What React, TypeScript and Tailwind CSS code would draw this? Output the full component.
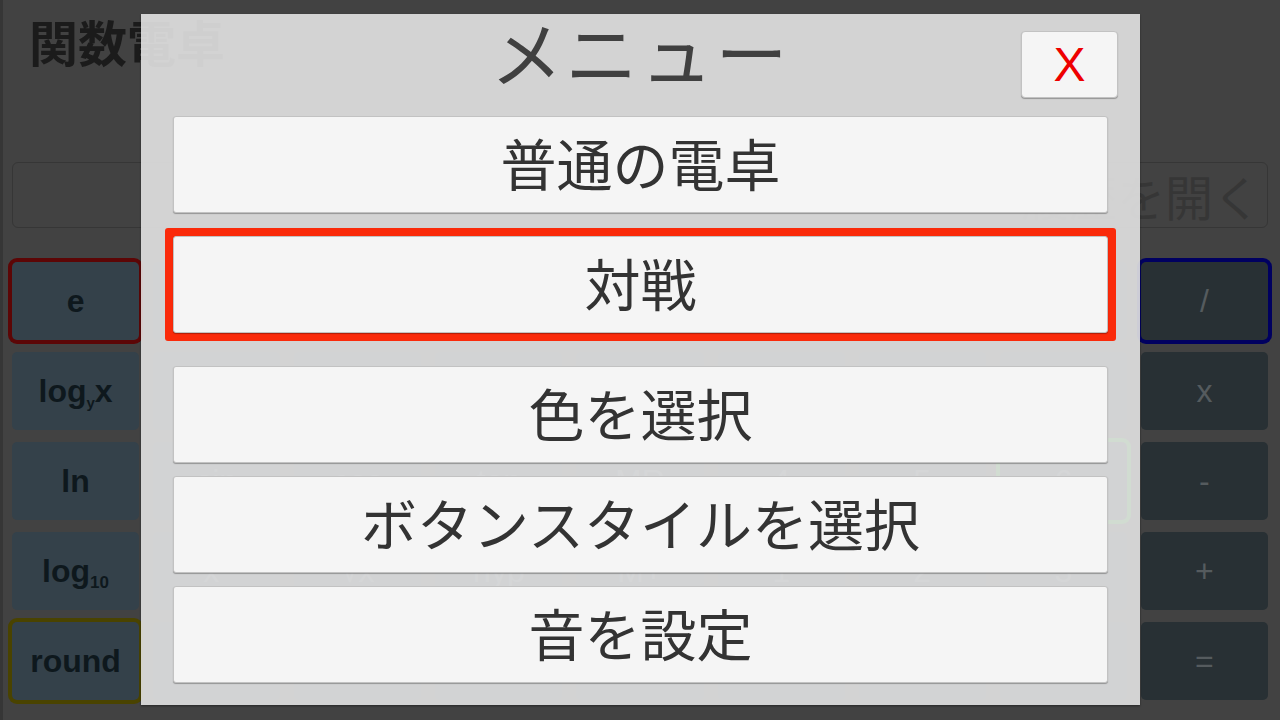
import React from "react";

type Key = {
  label: React.ReactNode;
  kind: "fn" | "num" | "op";
  ring?: string;
};

const jp = "font-['Noto_Sans_CJK_JP','Noto_Sans',sans-serif]";
const latin = "font-['Liberation_Sans',Arial,sans-serif]";

// middle keys of rows 1, 2 and 5 sit fully under the menu buttons, so they carry no label
const rows: Key[][] = [
  [
    { label: "e", kind: "fn", ring: "ring-4 ring-[#5c0606]" },
    { label: "", kind: "num" },
    { label: "", kind: "num" },
    { label: "", kind: "num" },
    { label: "", kind: "num" },
    { label: "", kind: "num" },
    { label: "", kind: "num" },
    { label: "", kind: "num" },
    { label: "/", kind: "op", ring: "ring-4 ring-[#000060]" },
  ],
  [
    {
      label: (
        <>
          log<sub className="text-[15px] align-baseline relative top-[6px]">y</sub>x
        </>
      ),
      kind: "fn",
    },
    { label: "", kind: "num" },
    { label: "", kind: "num" },
    { label: "", kind: "num" },
    { label: "", kind: "num" },
    { label: "", kind: "num" },
    { label: "", kind: "num" },
    { label: "", kind: "num" },
    { label: "x", kind: "op" },
  ],
  [
    { label: "ln", kind: "fn" },
    { label: "sin", kind: "num" },
    { label: "cos", kind: "num" },
    { label: "tan", kind: "num" },
    { label: "MR", kind: "num" },
    { label: "4", kind: "num" },
    { label: "5", kind: "num" },
    { label: "6", kind: "num", ring: "ring-4 ring-[#2f9a2f]" },
    { label: "-", kind: "op" },
  ],
  [
    {
      label: (
        <>
          log<sub className="text-[17px] align-baseline relative top-[6px]">10</sub>
        </>
      ),
      kind: "fn",
    },
    { label: "x²", kind: "num" },
    { label: "√x", kind: "num" },
    { label: "hyp", kind: "num" },
    { label: "M+", kind: "num" },
    { label: "1", kind: "num" },
    { label: "2", kind: "num" },
    { label: "3", kind: "num" },
    { label: "+", kind: "op" },
  ],
  [
    { label: "round", kind: "fn", ring: "ring-4 ring-[#4a4300]" },
    { label: "", kind: "num" },
    { label: "", kind: "num" },
    { label: "", kind: "num" },
    { label: "", kind: "num" },
    { label: "", kind: "num" },
    { label: "", kind: "num" },
    { label: "", kind: "num" },
    { label: "=", kind: "op" },
  ],
];

function CalcKey({ k }: { k: Key }) {
  const tone =
    k.kind === "fn"
      ? "bg-[#34414a] text-[#0e181d] font-bold"
      : k.kind === "op"
        ? "bg-[#283034] text-[#555b5e]"
        : "bg-[#34414a] text-[#55606a]";
  return (
    <div
      className={`flex items-center justify-center rounded-[5px] text-[32px] leading-none ${latin} ${tone} ${k.ring ?? ""}`}
    >
      <span>{k.label}</span>
    </div>
  );
}

function MenuButton({ label }: { label: string }) {
  return (
    <div
      className={`h-[97px] w-full flex items-center justify-center pb-[6px] bg-[#f5f5f5] rounded-[3px] border border-[#c2c2c2] shadow-[0_1px_1px_rgba(0,0,0,0.3)] text-[56px] leading-none text-[#333333] ${jp}`}
    >
      {label}
    </div>
  );
}

export default function App() {
  return (
    <div className="relative w-[1280px] h-[720px] overflow-hidden bg-[#424242] shadow-[inset_3px_0_0_#363636]">
      {/* dimmed calculator behind the menu */}
      <div className="flex flex-col px-[12px]">
        <div className="h-[162px] pt-[16px] pl-[17px]">
          <h1 className={`text-[49px] leading-none font-bold text-[#1b1b1b] ${jp}`}>関数電卓</h1>
        </div>
        <div
          className={`h-[66px] flex items-center justify-end pr-[6px] rounded-[6px] border border-[#363636] text-[48px] leading-none text-[#363636] ${jp}`}
        >
          履歴を開く
        </div>
        <div className="mt-[34px] grid grid-cols-9 grid-rows-[repeat(5,78px)] gap-x-[14px] gap-y-[12px]">
          {rows.flat().map((k, i) => (
            <CalcKey key={i} k={k} />
          ))}
        </div>
      </div>

      {/* menu dialog */}
      <div className="absolute left-[141px] top-[14px] w-[999px] h-[691px] bg-[#e3e3e3]/90 shadow-[0_1px_2px_rgba(0,0,0,0.4)] flex flex-col px-[32px]">
        <div className="relative h-[102px] flex justify-center">
          <div className={`h-[72px] text-[72px] leading-none tracking-[3px] text-[#404040] ${jp}`}>メニュー</div>
          <button
            className={`absolute right-[-10px] top-[17px] w-[97px] h-[67px] flex items-center justify-center bg-[#f5f5f5] rounded-[4px] border border-[#c2c2c2] shadow-[0_1px_1px_rgba(0,0,0,0.3)] text-[48px] leading-none text-[#ee0000] ${latin}`}
          >
            X
          </button>
        </div>
        <MenuButton label="普通の電卓" />
        <div className="mt-[15px] -mx-[8px] p-[8px] bg-[#fa2a0a] rounded-[3px]">
          <MenuButton label="対戦" />
        </div>
        <div className="mt-[25px] flex flex-col gap-[13px]">
          <MenuButton label="色を選択" />
          <MenuButton label="ボタンスタイルを選択" />
          <MenuButton label="音を設定" />
        </div>
      </div>
    </div>
  );
}
